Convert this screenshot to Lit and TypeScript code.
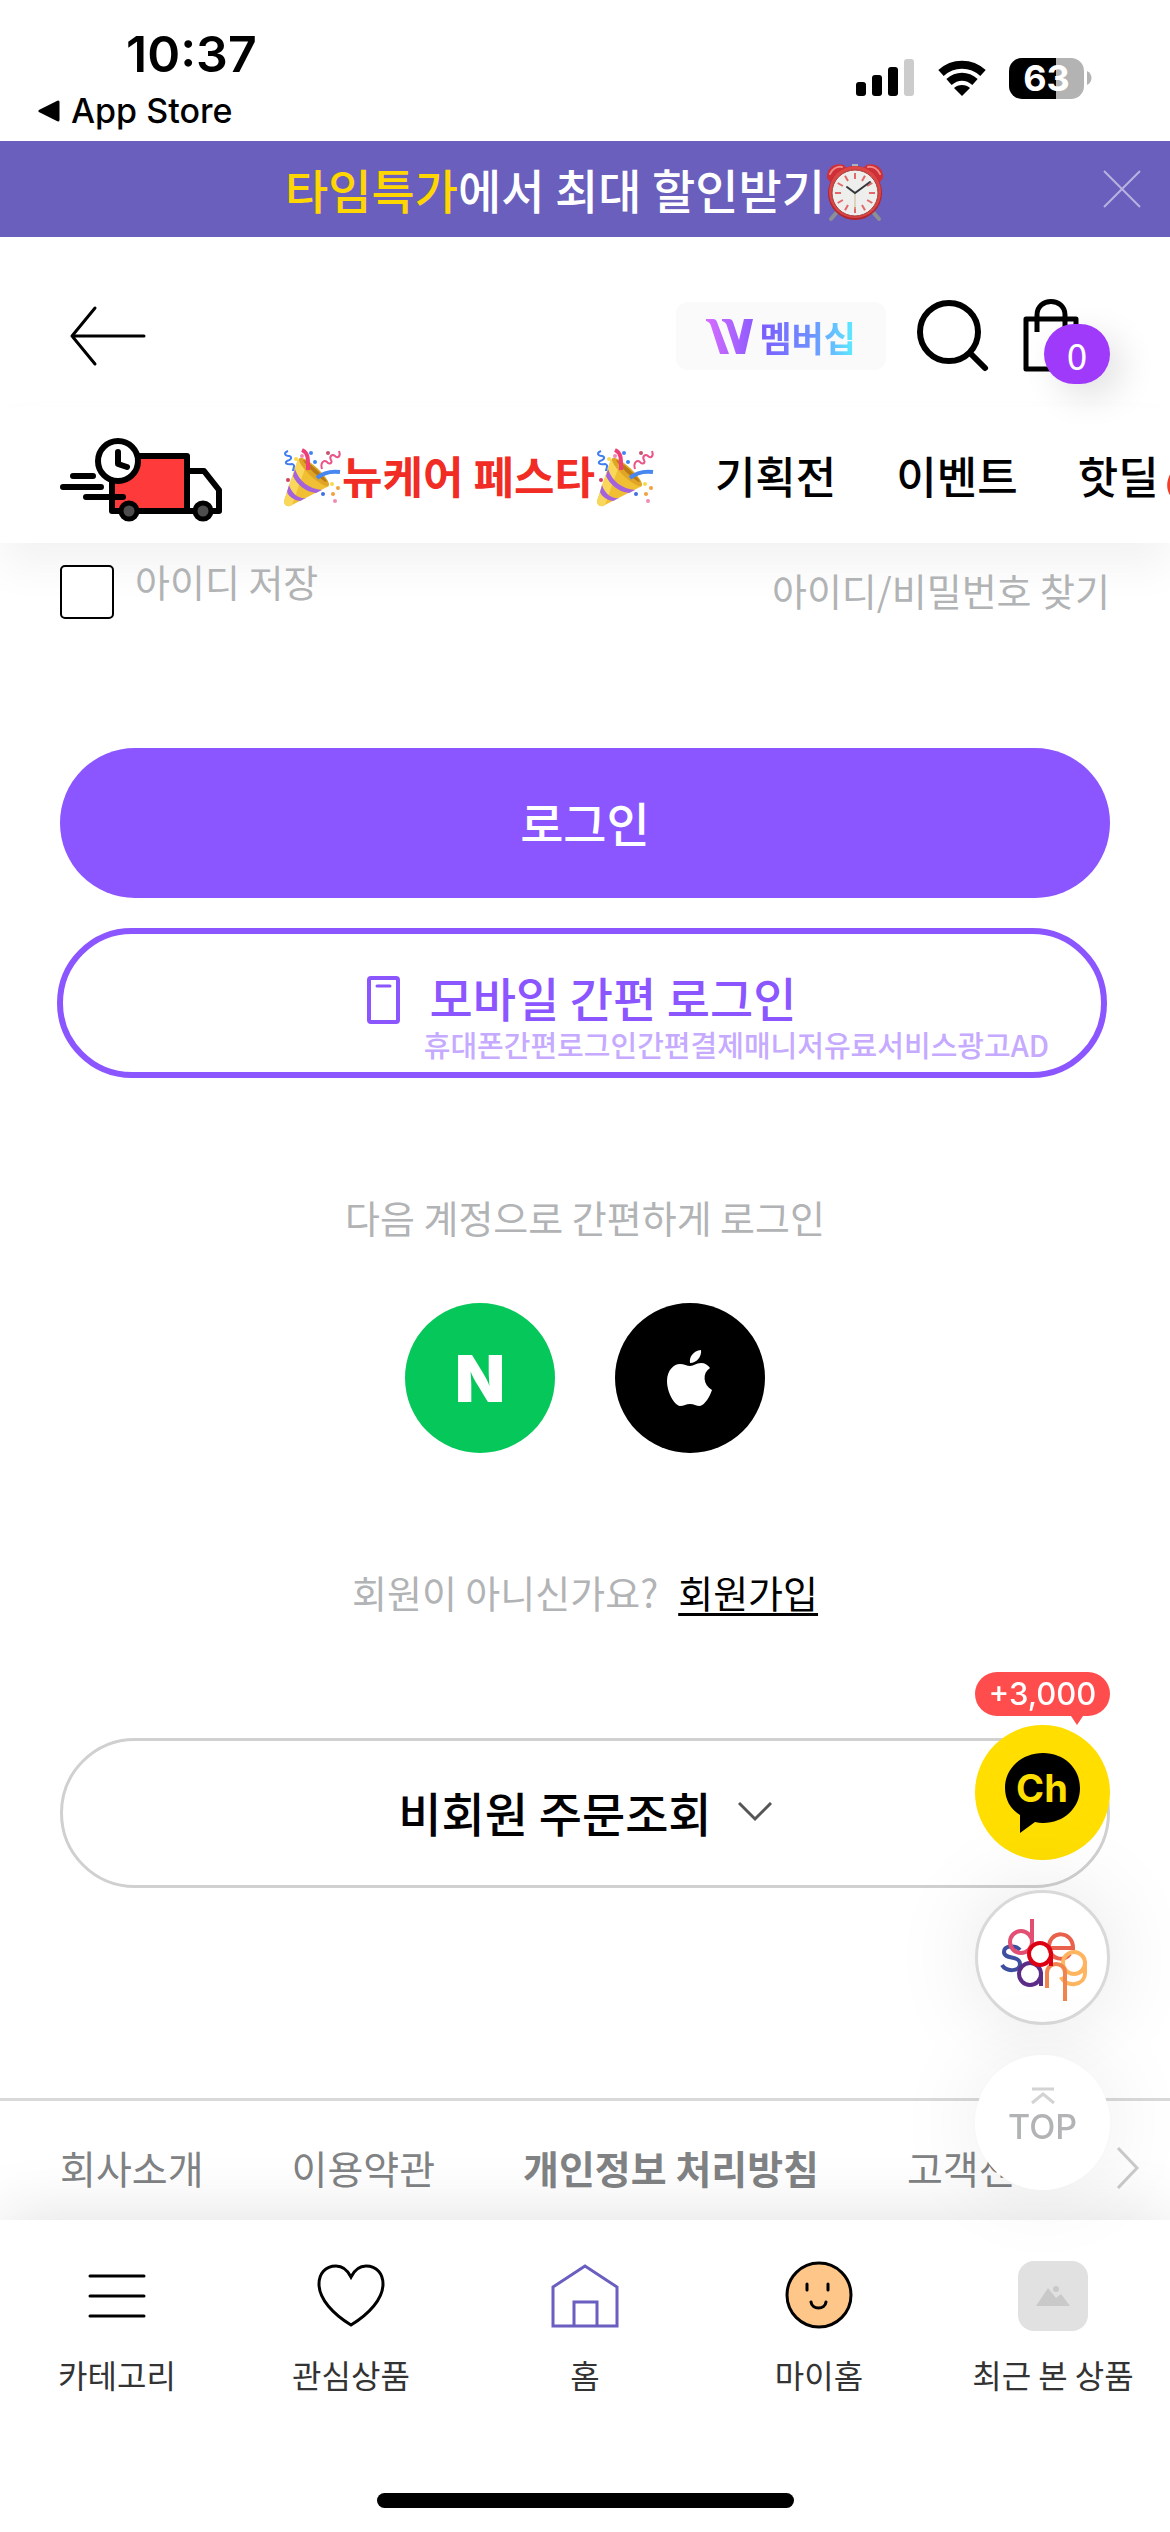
import { LitElement, html, css, svg } from "lit";
import { customElement, state } from "lit/decorators.js";

const clockRays = Array.from({ length: 12 }, (_, i) => i * 30);

const alarmClock = html`<svg class="emoji" viewBox="0 0 60 60" role="img" aria-label="알람시계">
  <path d="M12 50L6 57M48 50L54 57" stroke="#8d8f96" stroke-width="4" stroke-linecap="round" />
  <path d="M27 2h6v6h-6z" fill="#a9b4b8" />
  <path d="M2 16C1 7 9 0 19 3L22 7L5 20Z" fill="#cf3038" />
  <path d="M58 16C59 7 51 0 41 3L38 7L55 20Z" fill="#cf3038" />
  <path d="M5 12C7 7 12 4 17 5M55 12C53 7 48 4 43 5" fill="none" stroke="#f08a86" stroke-width="2" stroke-linecap="round" />
  <circle cx="30" cy="31" r="27" fill="#b3262c" />
  <circle cx="30" cy="30" r="26" fill="#dc4745" />
  <circle cx="30" cy="31" r="23" fill="#eeeeec" stroke="#a53a3b" />
  ${clockRays.map(
    (a) => svg`<path d="M30 11V17" stroke="#e2686b" stroke-width="2" transform="rotate(${a} 30 31)" />`
  )}
  <path d="M30 31V47" stroke="#c9b98a" stroke-width="1" />
  <path d="M22 25L30 31L45 20" fill="none" stroke="#33383b" stroke-width="2" stroke-linecap="round" />
</svg>`;

const popper = html`<svg class="emoji" viewBox="0 0 60 60" role="img" aria-label="폭죽">
  <path d="M16 11L47 38L8 58Q2 59 2 53Z" fill="#f0bf33" />
  <path d="M16 11L24 18L10 57L8 58Q2 59 2 53Z" fill="#f9d75b" />
  <path d="M13 21C17 33 27 41 40 42L34 45C24 44 15 37 11 28Z" fill="#a463dc" />
  <path d="M7 37C10 46 17 51 24 50L18 53C12 52 7 49 5 44Z" fill="#a463dc" />
  <ellipse cx="32" cy="24" rx="5" ry="20" transform="rotate(-47 32 24)" fill="#e0a526" />
  <ellipse cx="33" cy="23" rx="2" ry="16" transform="rotate(-47 33 23)" fill="#b97a14" />
  <path d="M20 2C27 5 26 13 26 22" fill="none" stroke="#ee3f78" stroke-width="4" />
  <path d="M35 30C42 24 50 23 58 24" fill="none" stroke="#4787f2" stroke-width="4" />
  <path d="M6 3C1 5 3 8 7 8C11 9 9 12 5 13C2 15 5 17 10 16C14 17 11 20 11 23" fill="none" stroke="#3f7df0" stroke-width="2" />
  <path d="M57 3C59 8 56 11 53 8C50 5 47 9 49 12C51 15 47 17 45 14C42 11 38 15 40 21" fill="none" stroke="#ea5586" stroke-width="2" />
  <circle cx="14" cy="11" r="2" fill="#f9d94a" />
  <circle cx="29" cy="5" r="2" fill="#3f86f2" />
  <circle cx="33" cy="14" r="2" fill="#3f86f2" />
  <circle cx="46" cy="5" r="2" fill="#c4536b" />
  <circle cx="20" cy="8" r="2" fill="#f08bb4" />
  <circle cx="6" cy="32" r="2" fill="#d1405c" />
  <circle cx="50" cy="36" r="2" fill="#f9d94a" />
  <circle cx="56" cy="40" r="2" fill="#f2a13d" />
  <circle cx="51" cy="46" r="2" fill="#f2a13d" />
  <circle cx="41" cy="46" r="2" fill="#3f72e0" />
  <circle cx="53" cy="53" r="2" fill="#f08bb4" />
</svg>`;

const flame = html`<svg class="emoji" viewBox="-3 -3 66 66" role="img" aria-label="불꽃">
  <path d="M30 2C42 12 54 24 54 39C54 52 44 58 30 58C15 58 6 50 6 38C6 30 10 24 13 19C15 24 17 27 21 29C20 17 24 8 30 2Z" fill="#f0402a" />
  <path d="M31 26C40 34 45 40 44 47C43 54 37 57 30 57C22 57 17 53 17 46C17 41 20 38 22 35C24 38 26 40 29 40C28 34 29 30 31 26Z" fill="#fdc233" />
</svg>`;

const truck = html`<svg class="truck" viewBox="0 -10 162 94" role="img" aria-label="오늘 배송">
  <path d="M127 33H144L159 52V73H127Z" fill="#fff" stroke="#000" stroke-width="6" stroke-linejoin="round" />
  <rect x="52" y="18" width="75" height="55" fill="#ff3a3a" stroke="#000" stroke-width="6" stroke-linejoin="round" />
  <path d="M13 38H33M3 49H41M26 59H63" stroke="#000" stroke-width="6" stroke-linecap="round" />
  <circle cx="58" cy="23" r="20" fill="#fff" stroke="#000" stroke-width="6" />
  <path d="M58 14V26L67 29" fill="none" stroke="#000" stroke-width="6" stroke-linecap="round" stroke-linejoin="round" />
  <circle cx="69" cy="73" r="8" fill="#4d4d4d" stroke="#000" stroke-width="5" />
  <circle cx="143" cy="73" r="8" fill="#4d4d4d" stroke="#000" stroke-width="5" />
</svg>`;

const tabs = [
  {
    label: "카테고리",
    icon: svg`<path d="M8 15H62M8 35H62M8 55H62" stroke="#000" stroke-width="3" stroke-linecap="round" />`,
  },
  {
    label: "관심상품",
    icon: svg`<path d="M35 16C31 8 25 5 20 5C9 5 3 13 3 23C3 38 17 53 35 64C53 53 67 38 67 23C67 13 61 5 50 5C45 5 39 8 35 16Z" fill="none" stroke="#000" stroke-width="3" />`,
  },
  {
    label: "홈",
    icon: svg`<path d="M3 26L35 5L67 26V65H3ZM24 65V41H47V65" fill="none" stroke="#6a5fc1" stroke-width="3" />`,
  },
  {
    label: "마이홈",
    icon: svg`<circle cx="35" cy="34" r="32" fill="#ffc68a" stroke="#000" stroke-width="3" />
      <path d="M23 23V29M44 23V29M27 41C28 49 41 49 42 41" fill="none" stroke="#000" stroke-width="3" stroke-linecap="round" />`,
  },
  {
    label: "최근 본 상품",
    icon: svg`<rect width="70" height="70" rx="16" fill="#e1e1e1" />
      <path d="M18 45L30 27L38 37L43 33L52 45Z" fill="#c9c9c9" /><circle cx="38" cy="28" r="3" fill="#c9c9c9" />`,
  },
];

@customElement("app-root")
export class AppRoot extends LitElement {
  @state() private saveId = false;

  static styles = css`
    :host {
      display: flex;
      flex-direction: column;
      min-height: 100vh;
      overflow-x: hidden;
      background: #fff;
      color: #000;
      font-family: "Noto Sans CJK KR", sans-serif;
    }
    * {
      box-sizing: border-box;
    }
    svg {
      display: block;
      flex: none;
    }
    button,
    a {
      font: inherit;
      color: inherit;
      text-decoration: none;
    }
    button {
      padding: 0;
      border: 0;
      background: none;
      cursor: pointer;
    }
    .status {
      display: flex;
      justify-content: space-between;
      height: 141px;
      padding: 24px 78px 0 38px;
      font-family: Inter, sans-serif;
    }
    .time {
      padding-left: 88px;
      font-size: 50px;
      font-weight: 600;
      line-height: 60px;
    }
    .back-app {
      display: flex;
      align-items: center;
      gap: 10px;
      font-size: 34px;
      font-weight: 500;
      line-height: 54px;
    }
    .indicators {
      display: flex;
      align-items: center;
      gap: 22px;
      height: 108px;
    }
    .battery {
      display: flex;
      align-items: center;
      gap: 3px;
    }
    .level {
      width: 75px;
      border-radius: 13px;
      background: linear-gradient(90deg, #000 63%, #b3b3b3 63%);
      color: #fff;
      font-size: 36px;
      font-weight: 700;
      line-height: 41px;
      text-align: center;
    }
    .banner {
      display: grid;
      grid-template-columns: 1fr auto 1fr;
      align-items: center;
      height: 96px;
      padding: 0 28px;
      background: #6a5fbd;
      color: #fff;
      font-size: 47px;
      font-weight: 500;
    }
    .promo {
      grid-column: 2;
      display: flex;
      align-items: center;
      line-height: 60px;
    }
    .promo strong {
      color: #ffd600;
      font-weight: 500;
    }
    .close {
      justify-self: end;
    }
    .emoji {
      width: 60px;
      height: 60px;
      margin-top: 6px;
    }
    .header {
      display: flex;
      align-items: center;
      height: 170px;
      padding: 28px 60px 0;
    }
    .membership {
      display: flex;
      align-items: center;
      gap: 6px;
      height: 68px;
      margin-left: auto;
      padding: 0 30px;
      border-radius: 12px;
      background: #fafafa;
      font-size: 35px;
      font-weight: 700;
    }
    .membership span {
      background: linear-gradient(90deg, #7d58ff, #6d93ff 55%, #5cf0ff);
      background-clip: text;
      -webkit-background-clip: text;
      color: transparent;
    }
    .search,
    .cart {
      margin-left: 30px;
    }
    .cart {
      position: relative;
      width: 88px;
    }
    .count {
      position: absolute;
      right: 0;
      bottom: -10px;
      width: 66px;
      border-radius: 30px;
      background: #a03afa;
      box-shadow: 12px 12px 36px rgba(0, 0, 0, 0.12);
      color: #fff;
      font-size: 37px;
      line-height: 60px;
      text-align: center;
    }
    .menu-wrap {
      box-shadow: 0 24px 40px rgba(0, 0, 0, 0.05);
    }
    .menu {
      display: flex;
      align-items: center;
      gap: 60px;
      height: 136px;
      padding: 0 60px;
      overflow: hidden;
      background: #fff;
      font-size: 44px;
      font-weight: 500;
      line-height: 60px;
      white-space: nowrap;
    }
    .menu a {
      display: flex;
      align-items: center;
      flex: none;
    }
    .menu .hot {
      color: #f02c24;
      font-weight: 700;
    }
    .truck {
      width: 162px;
      height: 94px;
    }
    .content {
      padding: 22px 60px 0;
    }
    .options {
      display: flex;
      justify-content: space-between;
      align-items: flex-start;
      margin-bottom: 129px;
      color: #b1b3b5;
      font-size: 38px;
      line-height: 50px;
    }
    .save {
      display: flex;
      gap: 21px;
      line-height: 32px;
    }
    .save input {
      appearance: none;
      width: 54px;
      height: 54px;
      margin: 0;
      border: 2px solid #000;
      border-radius: 5px;
      background: #fff;
    }
    .save input:checked {
      background: #8b55ff;
    }
    .pill {
      display: flex;
      align-items: center;
      justify-content: center;
      width: 100%;
      height: 150px;
      border-radius: 75px;
      font-size: 47px;
      font-weight: 500;
      line-height: 54px;
    }
    .login {
      padding-bottom: 3px;
      background: #8b55ff;
      color: #fff;
    }
    .mobile {
      flex-direction: column;
      justify-content: flex-start;
      margin: 30px 0 0 -3px;
      padding: 36px 52px 0;
      border: 6px solid #8b55ff;
      color: #8b55ff;
    }
    .mobile-title {
      display: flex;
      align-items: flex-end;
      gap: 29px;
    }
    .mobile-note {
      align-self: flex-end;
      color: #c5aaff;
      font-size: 29px;
      line-height: 40px;
    }
    .hint,
    .join {
      margin: 110px 0 57px;
      color: #b1b3b5;
      font-size: 38px;
      line-height: 58px;
      text-align: center;
    }
    .join {
      display: flex;
      justify-content: center;
      gap: 20px;
      margin-bottom: 117px;
    }
    .join a {
      color: #000;
      text-decoration: underline;
      text-decoration-thickness: 3px;
      text-underline-offset: 5px;
    }
    .social {
      display: flex;
      justify-content: center;
      gap: 60px;
    }
    .social a {
      display: flex;
      align-items: center;
      justify-content: center;
      width: 150px;
      height: 150px;
      border-radius: 50%;
      background: #000;
      color: #fff;
    }
    .social .naver {
      background: #06c75a;
      font-family: Inter, sans-serif;
      font-size: 65px;
      font-weight: 900;
    }
    .guest {
      gap: 26px;
      padding-bottom: 3px;
      border: 3px solid #d0d0d0;
    }
    .footer {
      display: flex;
      gap: 60px;
      flex: 1;
      margin-top: 210px;
      padding: 37px 30px 24px 60px;
      border-top: 3px solid #d9d9d9;
      color: #808284;
      font-size: 39px;
      line-height: 58px;
      white-space: nowrap;
    }
    .footer-links {
      display: flex;
      gap: 88px;
      flex: 1;
      min-width: 0;
      overflow: hidden;
    }
    .footer svg {
      margin-top: 8px;
    }
    .tabbar {
      position: sticky;
      bottom: 0;
      padding: 41px 0 24px;
      background: #fff;
      box-shadow: 0 -6px 60px rgba(0, 0, 0, 0.11);
    }
    .tabs {
      display: grid;
      grid-template-columns: repeat(5, 1fr);
      color: #333;
      font-size: 32px;
      line-height: 48px;
    }
    .tabs a {
      display: flex;
      flex-direction: column;
      align-items: center;
      gap: 19px;
      white-space: nowrap;
    }
    .home-bar {
      width: 417px;
      height: 15px;
      margin: 95px auto 0;
      border-radius: 8px;
      background: #000;
    }
    .floating {
      position: fixed;
      right: 60px;
      bottom: 342px;
      display: flex;
      flex-direction: column;
      gap: 30px;
      font-family: Inter, sans-serif;
    }
    .reward {
      position: absolute;
      right: 0;
      bottom: 100%;
      width: 135px;
      margin-bottom: 9px;
      border-radius: 22px;
      background: #ff4d4d;
      color: #fff;
      font-size: 31px;
      font-weight: 500;
      line-height: 44px;
      text-align: center;
    }
    .reward::after {
      content: "";
      position: absolute;
      top: 100%;
      right: 27px;
      border: 6px solid transparent;
      border-top: 9px solid #ff4d4d;
      border-bottom: 0;
    }
    .round {
      display: flex;
      flex-direction: column;
      align-items: center;
      justify-content: center;
      width: 135px;
      height: 135px;
      border-radius: 50%;
      background: #fff;
    }
    .kakao {
      background: #ffde00;
    }
    .daesang {
      border: 3px solid #d9d9d9;
      box-shadow: 0 0 90px rgba(0, 0, 0, 0.1);
    }
    .top {
      gap: 2px;
      padding-bottom: 12px;
      box-shadow: 0 0 90px rgba(0, 0, 0, 0.08);
      color: #b1b3b5;
      font-size: 34px;
      font-weight: 500;
      line-height: 40px;
    }
  `;

  render() {
    return html`
      <div class="status">
        <div>
          <div class="time">10:37</div>
          <div class="back-app">
            <svg width="23" height="22" viewBox="0 0 23 22"><path d="M2 11L20 2V20Z" stroke="#000" stroke-width="3" stroke-linejoin="round" /></svg>
            App Store
          </div>
        </div>
        <div class="indicators">
          <svg width="59" height="38" viewBox="0 0 59 38">
            <rect y="23" width="10" height="14" rx="3" /><rect x="16" y="16" width="10" height="21" rx="3" />
            <rect x="32" y="8" width="10" height="29" rx="3" /><rect x="48" width="10" height="37" rx="3" fill="#ccc" />
          </svg>
          <svg width="50" height="38" viewBox="0 0 50 38">
            <path d="M25 37L17 29C21 25 29 25 33 29Z" />
            <path d="M12 23C20 16 30 16 38 23M4 14C16 3 34 3 46 14" fill="none" stroke="#000" stroke-width="8" />
          </svg>
          <div class="battery">
            <div class="level">63</div>
            <svg width="5" height="14" viewBox="0 0 5 14"><path d="M0 0C6 3 6 11 0 14Z" fill="#b3b3b3" /></svg>
          </div>
        </div>
      </div>

      <div class="banner">
        <div class="promo"><strong>타임특가</strong>에서 최대 할인받기${alarmClock}</div>
        <button class="close" aria-label="닫기">
          <svg width="40" height="40" viewBox="0 0 40 40"><path d="M2 2L38 38M38 2L2 38" stroke="#b8b2e0" stroke-width="2" /></svg>
        </button>
      </div>

      <header class="header">
        <button aria-label="뒤로">
          <svg width="96" height="62" viewBox="0 0 96 62"><path d="M35 3L12 31L35 59M12 31H84" fill="none" stroke="#000" stroke-width="3" stroke-linecap="round" stroke-linejoin="round" /></svg>
        </button>
        <a class="membership" href="#membership">
          <svg width="47" height="35" viewBox="0 0 47 35">
            <defs><linearGradient id="w" x1="0" x2="1"><stop stop-color="#d66dff" /><stop offset="1" stop-color="#8f5bff" /></linearGradient></defs>
            <path d="M0 0H7Q10 0 11 3L23 35H14L5 7Q4 3 0 2ZM16 0H23Q26 0 27 3L33 21L38 0H47L39 35H30L21 7Q20 3 16 2Z" fill="url(#w)" />
          </svg>
          <span>멤버십</span>
        </a>
        <button class="search" aria-label="검색">
          <svg width="76" height="76" viewBox="0 0 76 76"><circle cx="33" cy="34" r="29" fill="none" stroke="#000" stroke-width="6" /><path d="M54 55L69 70" stroke="#000" stroke-width="6" stroke-linecap="round" /></svg>
        </button>
        <button class="cart" aria-label="장바구니">
          <svg width="58" height="76" viewBox="0 0 58 76"><path d="M4 21H54V71H4ZM15 34V17C15 -1 43 -1 43 17V34" fill="none" stroke="#000" stroke-width="5" stroke-linejoin="round" /></svg>
          <span class="count">0</span>
        </button>
      </header>

      <div class="menu-wrap">
        <nav class="menu">
          <a href="#delivery">${truck}</a>
          <a class="hot" href="#festa">${popper}뉴케어 페스타${popper}</a>
          <a href="#exhibition">기획전</a>
          <a href="#event">이벤트</a>
          <a href="#hotdeal">핫딜${flame}</a>
        </nav>
      </div>

      <main class="content">
        <div class="options">
          <label class="save">
            <input type="checkbox" .checked=${this.saveId} @change=${() => (this.saveId = !this.saveId)} />
            아이디 저장
          </label>
          <a href="#find">아이디/비밀번호 찾기</a>
        </div>
        <button class="pill login">로그인</button>
        <button class="pill mobile">
          <span class="mobile-title">
            <svg width="33" height="48" viewBox="0 0 33 48"><rect x="2" y="2" width="29" height="44" rx="2" fill="none" stroke="#8b55ff" stroke-width="4" /><path d="M10 10H23" stroke="#8b55ff" stroke-width="3" stroke-linecap="round" /></svg>
            모바일 간편 로그인
          </span>
          <span class="mobile-note">휴대폰간편로그인간편결제매니저유료서비스광고AD</span>
        </button>
        <p class="hint">다음 계정으로 간편하게 로그인</p>
        <div class="social">
          <a class="naver" href="#naver">N</a>
          <a href="#apple" aria-label="Apple">
            <svg width="46" height="56" viewBox="0 0 46 56">
              <path d="M23 13C22 7 26 1 34 0C35 6 30 13 23 13Z" fill="#fff" />
              <path d="M23 16C27 16 29 13 34 13C38 13 41 15 43 18C35 23 36 35 45 40C43 46 38 55 33 56C29 56 27 54 23 54C19 54 17 56 13 56C7 55 0 42 0 31C0 20 7 14 13 14C17 14 20 16 23 16Z" fill="#fff" />
            </svg>
          </a>
        </div>
        <div class="join">
          <span>회원이 아니신가요?</span>
          <a href="#join">회원가입</a>
        </div>
        <button class="pill guest">
          비회원 주문조회
          <svg width="34" height="20" viewBox="0 0 34 20"><path d="M1 1L17 17L33 1" fill="none" stroke="#555" stroke-width="3" /></svg>
        </button>
      </main>

      <footer class="footer">
        <div class="footer-links">
          <a href="#about">회사소개</a>
          <a href="#terms">이용약관</a>
          <a href="#privacy"><strong>개인정보 처리방침</strong></a>
          <a href="#support">고객센터</a>
        </div>
        <svg width="24" height="44" viewBox="0 0 24 44"><path d="M2 2L21 22L2 42" fill="none" stroke="#ccc" stroke-width="3" /></svg>
      </footer>

      <div class="tabbar">
        <nav class="tabs">
          ${tabs.map(
            (t) => html`<a href="#tab"><svg width="70" height="70" viewBox="0 0 70 70">${t.icon}</svg>${t.label}</a>`
          )}
        </nav>
        <div class="home-bar"></div>
      </div>

      <aside class="floating">
        <span class="reward">+3,000</span>
        <a class="round kakao" href="#kakao">
          <svg width="76" height="80" viewBox="0 0 76 80">
            <path d="M38 0C59 0 75 15 75 35C75 55 59 70 38 70Q34 70 30 69L15 80V62C5 56 0 46 0 35C0 15 17 0 38 0Z" />
            <text x="37" y="49" text-anchor="middle" font-family="Inter, sans-serif" font-size="38" font-weight="700" fill="#ffde00">Ch</text>
          </svg>
        </a>
        <a class="round daesang" href="#daesang" aria-label="대상">
          <svg width="88" height="88" viewBox="0 0 88 88" fill="none" stroke-width="4">
            <g stroke="#3f4fa0"><path d="M21 36C17 31 5 31 5 38C5 46 21 41 21 50C21 58 7 58 3 51" /></g>
            <g stroke="#e34f72"><circle cx="22" cy="28" r="11" /><path d="M33 5V30" /></g>
            <g stroke="#e9604c"><path d="M50 34H74C74 16 50 16 50 33C51 46 66 48 71 40" /></g>
            <g stroke="#ffb55f"><circle cx="75" cy="49" r="11" /><path d="M86 47V59C86 72 67 74 62 63" /></g>
            <g stroke="#f0844f"><path d="M48 74V59C48 47 66 47 66 59V87" /></g>
            <g stroke="#5b2c86"><circle cx="31" cy="60" r="11" /><path d="M42 58V72" /></g>
            <g stroke="#dc0012"><circle cx="41" cy="40" r="11" /><path d="M52 38V52" /></g>
          </svg>
        </a>
        <a class="round top" href="#top">
          <svg width="24" height="18" viewBox="0 0 24 18"><path d="M1 2H23M1 16L12 7L23 16" fill="none" stroke="#d3d3d3" stroke-width="3" /></svg>
          TOP
        </a>
      </aside>
    `;
  }
}
